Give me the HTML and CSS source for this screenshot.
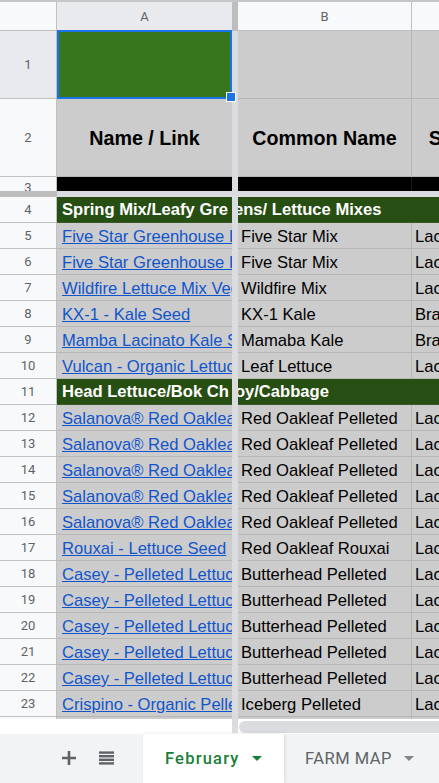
FILE: index.html
```
<!DOCTYPE html>
<html>
<head>
<meta charset="utf-8">
<link rel="stylesheet" href="styles.css">
</head>
<body>
<div class="app">
  <div class="grid">
    <div class="row hdr">
      <div class="rh corner"></div>
      <div class="ch a selhdr">A</div>
      <div class="vbar dark"></div>
      <div class="ch b">B</div>
      <div class="ch c">C</div>
    </div>
    <div class="row r1">
      <div class="rh selhdr">1</div>
      <div class="cell a green sel-cell"><span class="sel-box"></span><span class="sel-handle"></span></div>
      <div class="vbar"></div>
      <div class="cell b"></div>
      <div class="cell c"></div>
    </div>
    <div class="row r2">
      <div class="rh">2</div>
      <div class="cell a th">Name / Link</div>
      <div class="vbar"></div>
      <div class="cell b th">Common Name</div>
      <div class="cell c th">Scientific Name</div>
    </div>
    <div class="row r3">
      <div class="rh"><span>3</span></div>
      <div class="cell a black"></div>
      <div class="vbar"></div>
      <div class="cell b black"></div>
      <div class="cell c black"></div>
    </div>
    <div class="row freeze">
      <div class="fz-dark"></div>
      <div class="fz-light"></div>
    </div>
    <div class="row section">
      <div class="rh">4</div>
      <div class="cell a sec">Spring Mix/Leafy Gre<span class="pane-gap"></span>ens/ Lettuce Mixes</div>
      <div class="vbar"></div>
      <div class="cell b"></div>
      <div class="cell c"></div>
    </div>
    <div class="row dr">
      <div class="rh">5</div>
      <div class="cell a"><a class="link">Five Star Greenhouse Lettuce Mix</a></div>
      <div class="vbar"></div>
      <div class="cell b">Five Star Mix</div>
      <div class="cell c">Lactuca sativa</div>
    </div>
    <div class="row dr">
      <div class="rh">6</div>
      <div class="cell a"><a class="link">Five Star Greenhouse Lettuce Mix</a></div>
      <div class="vbar"></div>
      <div class="cell b">Five Star Mix</div>
      <div class="cell c">Lactuca sativa</div>
    </div>
    <div class="row dr">
      <div class="rh">7</div>
      <div class="cell a"><a class="link">Wildfire Lettuce Mix Vegetable Seed</a></div>
      <div class="vbar"></div>
      <div class="cell b">Wildfire Mix</div>
      <div class="cell c">Lactuca sativa</div>
    </div>
    <div class="row dr">
      <div class="rh">8</div>
      <div class="cell a"><a class="link">KX-1 - Kale Seed</a></div>
      <div class="vbar"></div>
      <div class="cell b">KX-1 Kale</div>
      <div class="cell c">Brassica oleracea</div>
    </div>
    <div class="row dr">
      <div class="rh">9</div>
      <div class="cell a"><a class="link">Mamba Lacinato Kale Seed</a></div>
      <div class="vbar"></div>
      <div class="cell b">Mamaba Kale</div>
      <div class="cell c">Brassica oleracea</div>
    </div>
    <div class="row dr">
      <div class="rh">10</div>
      <div class="cell a"><a class="link">Vulcan - Organic Lettuce Seed</a></div>
      <div class="vbar"></div>
      <div class="cell b">Leaf Lettuce</div>
      <div class="cell c">Lactuca sativa</div>
    </div>
    <div class="row section">
      <div class="rh">11</div>
      <div class="cell a sec">Head Lettuce/Bok Ch<span class="pane-gap"></span>oy/Cabbage</div>
      <div class="vbar"></div>
      <div class="cell b"></div>
      <div class="cell c"></div>
    </div>
    <div class="row dr">
      <div class="rh">12</div>
      <div class="cell a"><a class="link">Salanova® Red Oakleaf Pelleted</a></div>
      <div class="vbar"></div>
      <div class="cell b">Red Oakleaf Pelleted</div>
      <div class="cell c">Lactuca sativa</div>
    </div>
    <div class="row dr">
      <div class="rh">13</div>
      <div class="cell a"><a class="link">Salanova® Red Oakleaf Pelleted</a></div>
      <div class="vbar"></div>
      <div class="cell b">Red Oakleaf Pelleted</div>
      <div class="cell c">Lactuca sativa</div>
    </div>
    <div class="row dr">
      <div class="rh">14</div>
      <div class="cell a"><a class="link">Salanova® Red Oakleaf Pelleted</a></div>
      <div class="vbar"></div>
      <div class="cell b">Red Oakleaf Pelleted</div>
      <div class="cell c">Lactuca sativa</div>
    </div>
    <div class="row dr">
      <div class="rh">15</div>
      <div class="cell a"><a class="link">Salanova® Red Oakleaf Pelleted</a></div>
      <div class="vbar"></div>
      <div class="cell b">Red Oakleaf Pelleted</div>
      <div class="cell c">Lactuca sativa</div>
    </div>
    <div class="row dr">
      <div class="rh">16</div>
      <div class="cell a"><a class="link">Salanova® Red Oakleaf Pelleted</a></div>
      <div class="vbar"></div>
      <div class="cell b">Red Oakleaf Pelleted</div>
      <div class="cell c">Lactuca sativa</div>
    </div>
    <div class="row dr">
      <div class="rh">17</div>
      <div class="cell a"><a class="link">Rouxai - Lettuce Seed</a></div>
      <div class="vbar"></div>
      <div class="cell b">Red Oakleaf Rouxai</div>
      <div class="cell c">Lactuca sativa</div>
    </div>
    <div class="row dr">
      <div class="rh">18</div>
      <div class="cell a"><a class="link">Casey - Pelleted Lettuce Seed</a></div>
      <div class="vbar"></div>
      <div class="cell b">Butterhead Pelleted</div>
      <div class="cell c">Lactuca sativa</div>
    </div>
    <div class="row dr">
      <div class="rh">19</div>
      <div class="cell a"><a class="link">Casey - Pelleted Lettuce Seed</a></div>
      <div class="vbar"></div>
      <div class="cell b">Butterhead Pelleted</div>
      <div class="cell c">Lactuca sativa</div>
    </div>
    <div class="row dr">
      <div class="rh">20</div>
      <div class="cell a"><a class="link">Casey - Pelleted Lettuce Seed</a></div>
      <div class="vbar"></div>
      <div class="cell b">Butterhead Pelleted</div>
      <div class="cell c">Lactuca sativa</div>
    </div>
    <div class="row dr">
      <div class="rh">21</div>
      <div class="cell a"><a class="link">Casey - Pelleted Lettuce Seed</a></div>
      <div class="vbar"></div>
      <div class="cell b">Butterhead Pelleted</div>
      <div class="cell c">Lactuca sativa</div>
    </div>
    <div class="row dr">
      <div class="rh">22</div>
      <div class="cell a"><a class="link">Casey - Pelleted Lettuce Seed</a></div>
      <div class="vbar"></div>
      <div class="cell b">Butterhead Pelleted</div>
      <div class="cell c">Lactuca sativa</div>
    </div>
    <div class="row dr">
      <div class="rh">23</div>
      <div class="cell a"><a class="link">Crispino - Organic Pelleted Lettuce</a></div>
      <div class="vbar"></div>
      <div class="cell b">Iceberg Pelleted</div>
      <div class="cell c">Lactuca sativa</div>
    </div>
    <div class="row dr">
      <div class="rh">24</div>
      <div class="cell a"></div>
      <div class="vbar"></div>
      <div class="cell b"></div>
      <div class="cell c"></div>
    </div>
  </div>
  <div class="hscroll">
    <div class="hs-left"></div>
    <div class="vbar"></div>
    <div class="hs-track"><div class="hs-thumb"></div></div>
  </div>
  <div class="tabbar">
    <div class="tb-icons">
      <svg class="ic-plus" width="14" height="14" viewBox="0 0 14 14"><path d="M7 0V14M0 7H14" stroke="#5f6368" stroke-width="2.6" fill="none"/></svg>
      <svg class="ic-list" width="15" height="14" viewBox="0 0 15 14" fill="#5f6368"><rect x="0" y="0.4" width="15" height="2.4"/><rect x="0" y="4" width="15" height="2.4"/><rect x="0" y="7.6" width="15" height="2.4"/><rect x="0" y="11.2" width="15" height="2.4"/></svg>
    </div>
    <div class="tab active"><span class="tab-label">February</span><span class="caret"></span></div>
    <div class="tab"><span class="tab-label">FARM MAP</span><span class="caret"></span></div>
  </div>
</div>
</body>
</html>
```
FILE: styles.css
```
html, body {
  margin: 0;
  padding: 0;
}
body {
  width: 439px;
  height: 783px;
  overflow: hidden;
  background: #ffffff;
  font-family: "Liberation Sans", Arial, sans-serif;
}
.app {
  width: 439px;
  height: 783px;
  display: flex;
  flex-direction: column;
  overflow: hidden;
}
.grid {
  height: 719px;
  flex-shrink: 0;
  box-sizing: border-box;
  border-top: 2px solid #c4c7c5;
  overflow: hidden;
}
.row {
  display: flex;
  width: 620px;
}
.row > * {
  flex-shrink: 0;
  box-sizing: border-box;
}
.rh {
  width: 57px;
  background: #f8f9fa;
  border-right: 1px solid #c0c0c0;
  border-bottom: 1px solid #c0c0c0;
  display: flex;
  align-items: center;
  justify-content: center;
  font-family: Roboto, "Liberation Sans", sans-serif;
  font-size: 13px;
  color: #5f6368;
}
.rh.selhdr, .ch.selhdr {
  background: #e8eaed;
}
.a { width: 175px; }
.b { width: 174px; border-right: 1px solid #b7b7b7; }
.c { width: 180px; }
.vbar {
  width: 6px;
  background: #dadce0;
  z-index: 1;
}
.vbar.dark {
  background: #bdbdbd;
}
.hdr { height: 29px; }
.ch {
  background: #f8f9fa;
  border-bottom: 1px solid #c0c0c0;
  display: flex;
  align-items: center;
  justify-content: center;
  font-family: Roboto, "Liberation Sans", sans-serif;
  font-size: 13px;
  color: #5f6368;
}
.ch.b { border-right: 1px solid #c0c0c0; }
.cell {
  background: #cccccc;
  border-bottom: 1px solid #b7b7b7;
  overflow: hidden;
  white-space: nowrap;
  color: #000;
}
.r1 { height: 68px; }
.r2 { height: 78px; }
.r3 { height: 14px; }
.r3 .rh {
  align-items: flex-start;
  overflow: hidden;
  border-bottom: none;
}
.r3 .rh span { line-height: 22px; }
.green { background: #38761d; }
.sel-cell {
  position: relative;
  z-index: 3;
  overflow: visible;
}
.sel-box {
  position: absolute;
  left: 0;
  top: -1px;
  width: 175px;
  height: 69px;
  box-sizing: border-box;
  border: 2px solid #1a73e8;
}
.sel-handle {
  position: absolute;
  left: 169px;
  top: 61px;
  width: 10px;
  height: 10px;
  box-sizing: border-box;
  background: #1a73e8;
  border: 1px solid #ffffff;
}
.th {
  display: flex;
  align-items: center;
  justify-content: center;
  font-weight: bold;
  font-size: 19.7px;
  padding-top: 1px;
}
.black {
  background: #000;
  border-bottom: none;
}
.r3 .b { border-right-color: #1c1c1c; }
.freeze { height: 6px; }
.fz-dark { width: 57px; background: #bdbdbd; }
.fz-light { flex: 1; background: #dadce0; }
.section {
  height: 26px;
  background: #274e13;
}
.section .cell {
  background: transparent;
  border-right: none;
  border-bottom: 1px solid #3a5a2a;
}
.section .sec {
  overflow: visible;
  color: #fff;
  font-weight: bold;
  font-size: 16.6px;
  line-height: 24px;
  padding: 1px 0 0 5px;
}
.pane-gap {
  display: inline-block;
  width: 6px;
}
.dr { height: 26px; }
.dr .cell {
  font-size: 16.6px;
  line-height: 23px;
  padding-top: 2px;
  padding-left: 3px;
}
.dr .a { padding-left: 5px; }
.link {
  color: #1155cc;
  text-decoration: underline;
}
.hscroll {
  height: 15px;
  display: flex;
  flex-shrink: 0;
}
.hs-left { width: 232px; flex-shrink: 0; }
.hscroll .vbar { height: 14px; flex-shrink: 0; }
.hs-track {
  flex: 1;
  padding: 2px 0 0 1px;
}
.hs-thumb {
  height: 12px;
  border-radius: 6px 0 0 6px;
  background: #dadce0;
}
.tabbar {
  height: 49px;
  flex-shrink: 0;
  background: #f1f3f4;
  display: flex;
}
.tb-icons {
  width: 143px;
  box-sizing: border-box;
  display: flex;
  align-items: center;
  padding-left: 62px;
  gap: 23px;
}
.ic-plus, .ic-list { display: block; margin-top: -1px; }
.tab {
  display: flex;
  align-items: center;
  padding-left: 21px;
  font-family: Roboto, "Liberation Sans", sans-serif;
  font-size: 16.5px;
  color: #5f6368;
  letter-spacing: 0.5px;
}
.tab .caret {
  width: 0;
  height: 0;
  margin-left: 12px;
  border-left: 5px solid transparent;
  border-right: 5px solid transparent;
  border-top: 5px solid #80868b;
}
.tab.active {
  width: 141px;
  box-sizing: border-box;
  padding-left: 22px;
  background: #ffffff;
  color: #188038;
  font-weight: 500;
  letter-spacing: 1.2px;
  box-shadow: 1px 0 3px rgba(60, 64, 67, 0.15);
}
.tab.active .caret {
  border-top-color: #188038;
}
```
